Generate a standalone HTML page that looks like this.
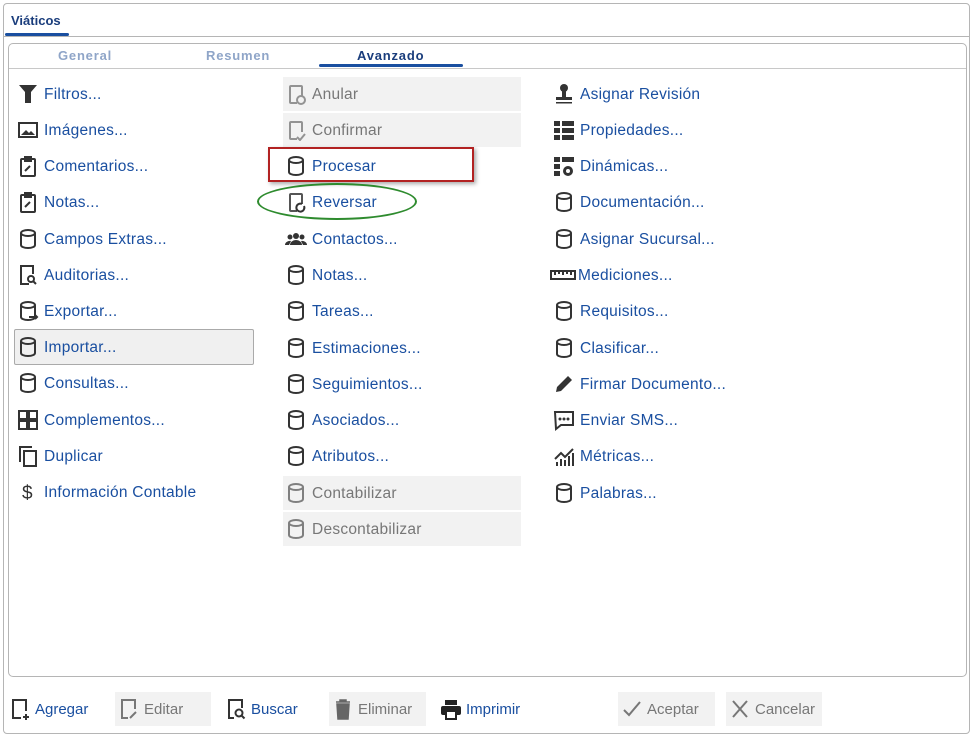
<!DOCTYPE html>
<html><head><meta charset="utf-8"><style>
*{box-sizing:border-box;margin:0;padding:0}
body{width:973px;height:736px;background:#fff;font-family:"Liberation Sans",sans-serif;position:relative;overflow:hidden}
.outer{position:absolute;left:3px;top:3px;width:967px;height:731px;border:1px solid #b5b5b5;border-radius:4px}
.hdr{position:absolute;left:11px;top:13px;font-size:13px;font-weight:bold;color:#1a3d7c}
.hul{position:absolute;left:5px;top:33px;width:64px;height:3px;background:#1a4fa0;border-radius:2px}
.hline{position:absolute;left:3px;top:36px;width:967px;height:1px;background:#b5b5b5}
.inner{position:absolute;left:8px;top:43px;width:959px;height:634px;border:1px solid #b5b5b5;border-radius:5px}
.tline{position:absolute;left:9px;top:68px;width:957px;height:1px;background:#c8c8c8}
.tab{position:absolute;top:48px;font-size:13px;font-weight:bold;color:#8fa5c8;letter-spacing:.8px}
.tul{position:absolute;left:319px;top:64px;width:144px;height:3px;background:#1a4fa0;border-radius:2px}
.it{position:absolute;height:34px;display:flex;align-items:center;font-size:15.5px;letter-spacing:.25px;color:#1a4fa0;white-space:nowrap;padding-top:2px}
.it svg{width:22px;height:22px;margin-right:5px;flex:none;margin-top:-2px}
.dis{background:#f2f2f2;color:#777;width:238px}
.dis svg{opacity:.6}
.btn{position:absolute;top:692px;height:34px;display:flex;align-items:center;font-size:15px;color:#1a4fa0}
.btn svg{width:22px;height:24px;margin-right:4px}
.bd{background:#f2f2f2;color:#777}
</style></head><body>
<svg width="0" height="0" style="position:absolute"><defs>
<g id="cyl" fill="none" stroke="#333" stroke-width="2"><ellipse cx="11" cy="5" rx="7" ry="3"/><path d="M4 5v12c0 1.7 3 3 7 3s7-1.3 7-3V5"/></g>
<g id="clip" fill="none" stroke="#333" stroke-width="2"><rect x="4" y="4" width="14" height="17" rx="1"/><rect x="8" y="2" width="6" height="4" fill="#333"/><path d="M8 16l5-5"/></g>
<g id="doc" fill="none" stroke="#555" stroke-width="2"><path d="M12 20H6a1 1 0 0 1-1-1V4a1 1 0 0 1 1-1h10a1 1 0 0 1 1 1v9"/></g>
</defs></svg>
<div class="outer"></div>
<div class="hdr">Viáticos</div><div class="hul"></div><div class="hline"></div>
<div class="inner"></div><div class="tline"></div>
<div class="tab" style="left:58px">General</div>
<div class="tab" style="left:206px">Resumen</div>
<div class="tab" style="left:357px;color:#1a3d7c">Avanzado</div>
<div class="tul"></div>

<!-- col1 -->
<div class="it" style="left:17px;top:77px"><svg viewBox="0 0 22 22"><path d="M2 2h18l-6 7v4H8V9z M8 13h6v7H8z" fill="#333"/></svg>Filtros...</div>
<div class="it" style="left:17px;top:113px"><svg viewBox="0 0 22 22"><rect x="2" y="4" width="18" height="14" fill="none" stroke="#333" stroke-width="2"/><path d="M4 16l5-5 3 3 2-2 4 4z" fill="#333"/></svg>Imágenes...</div>
<div class="it" style="left:17px;top:149px"><svg viewBox="0 0 22 22"><use href="#clip"/></svg>Comentarios...</div>
<div class="it" style="left:17px;top:185px"><svg viewBox="0 0 22 22"><use href="#clip"/></svg>Notas...</div>
<div class="it" style="left:17px;top:222px"><svg viewBox="0 0 22 22"><use href="#cyl"/></svg>Campos Extras...</div>
<div class="it" style="left:17px;top:258px"><svg viewBox="0 0 22 22"><g fill="none" stroke="#333" stroke-width="2"><path d="M12 20H4V2h12v8"/><circle cx="14" cy="15" r="3"/><path d="M16 17l3 3"/></g></svg>Auditorias...</div>
<div class="it" style="left:17px;top:294px"><svg viewBox="0 0 22 22"><use href="#cyl"/><path d="M12 17h8m-2-2l2 2-2 2" stroke="#333" stroke-width="2" fill="none"/></svg>Exportar...</div>
<div class="it" style="left:14px;top:329px;width:240px;height:36px;border:1px solid #aaa;background:#f0f0f0;padding-left:2px;border-radius:2px"><svg viewBox="0 0 22 22"><use href="#cyl"/></svg>Importar...</div>
<div class="it" style="left:17px;top:366px"><svg viewBox="0 0 22 22"><use href="#cyl"/></svg>Consultas...</div>
<div class="it" style="left:17px;top:403px"><svg viewBox="0 0 22 22"><g fill="none" stroke="#333" stroke-width="2"><rect x="2" y="2" width="8" height="8"/><rect x="12" y="2" width="8" height="8"/><rect x="2" y="12" width="8" height="8"/><rect x="12" y="12" width="8" height="8"/></g></svg>Complementos...</div>
<div class="it" style="left:17px;top:439px"><svg viewBox="0 0 22 22"><g fill="none" stroke="#333" stroke-width="2"><rect x="7" y="6" width="12" height="15"/><path d="M3 17V2h12"/></g></svg>Duplicar</div>
<div class="it" style="left:17px;top:475px"><svg viewBox="0 0 22 22"><text x="5" y="18" font-size="19" font-family="Liberation Sans" fill="#333">$</text></svg>Información Contable</div>

<!-- col2 -->
<div class="it dis" style="left:283px;top:77px;padding-left:2px"><svg viewBox="0 0 22 22"><use href="#doc"/><circle cx="16" cy="17" r="4" fill="none" stroke="#555" stroke-width="2"/></svg>Anular</div>
<div class="it dis" style="left:283px;top:113px;padding-left:2px"><svg viewBox="0 0 22 22"><use href="#doc"/><path d="M12 18l3 3 5-6" stroke="#555" stroke-width="2" fill="none"/></svg>Confirmar</div>
<div style="position:absolute;left:268px;top:147px;width:206px;height:35px;border:2px solid #b22222;box-shadow:2px 2px 4px #aaa"></div>
<div class="it" style="left:285px;top:149px"><svg viewBox="0 0 22 22"><use href="#cyl"/></svg>Procesar</div>
<div style="position:absolute;left:257px;top:183px;width:160px;height:37px;border:2px solid #2e8b2e;border-radius:50%"></div>
<div class="it" style="left:285px;top:185px"><svg viewBox="0 0 22 22"><use href="#doc"/><path d="M19 15a4 4 0 1 1-2-2" stroke="#333" stroke-width="2" fill="none"/></svg>Reversar</div>
<div class="it" style="left:285px;top:222px"><svg viewBox="0 0 22 22"><g fill="#333"><circle cx="11" cy="8" r="3"/><circle cx="5" cy="9" r="2.5"/><circle cx="17" cy="9" r="2.5"/><path d="M5 17a6 5 0 0 1 12 0z M0 17a5 4 0 0 1 6-4l-2 4z M22 17a5 4 0 0 0-6-4l2 4z"/></g></svg>Contactos...</div>
<div class="it" style="left:285px;top:258px"><svg viewBox="0 0 22 22"><use href="#cyl"/></svg>Notas...</div>
<div class="it" style="left:285px;top:294px"><svg viewBox="0 0 22 22"><use href="#cyl"/></svg>Tareas...</div>
<div class="it" style="left:285px;top:331px"><svg viewBox="0 0 22 22"><use href="#cyl"/></svg>Estimaciones...</div>
<div class="it" style="left:285px;top:367px"><svg viewBox="0 0 22 22"><use href="#cyl"/></svg>Seguimientos...</div>
<div class="it" style="left:285px;top:403px"><svg viewBox="0 0 22 22"><use href="#cyl"/></svg>Asociados...</div>
<div class="it" style="left:285px;top:439px"><svg viewBox="0 0 22 22"><use href="#cyl"/></svg>Atributos...</div>
<div class="it dis" style="left:283px;top:476px;padding-left:2px"><svg viewBox="0 0 22 22"><use href="#cyl"/></svg>Contabilizar</div>
<div class="it dis" style="left:283px;top:512px;padding-left:2px"><svg viewBox="0 0 22 22"><use href="#cyl"/></svg>Descontabilizar</div>

<!-- col3 -->
<div class="it" style="left:553px;top:77px"><svg viewBox="0 0 22 22"><g fill="#333"><circle cx="11" cy="5" r="4"/><rect x="9" y="8" width="4" height="6"/><rect x="3" y="14" width="16" height="3"/><rect x="3" y="19" width="16" height="1.5"/></g></svg>Asignar Revisión</div>
<div class="it" style="left:553px;top:113px"><svg viewBox="0 0 22 22"><g fill="#333"><rect x="1" y="2" width="6" height="5"/><rect x="9" y="2" width="12" height="5"/><rect x="1" y="9" width="6" height="5"/><rect x="9" y="9" width="12" height="5"/><rect x="1" y="16" width="6" height="5"/><rect x="9" y="16" width="12" height="5"/></g></svg>Propiedades...</div>
<div class="it" style="left:553px;top:149px"><svg viewBox="0 0 22 22"><g fill="#333"><rect x="1" y="2" width="6" height="5"/><rect x="9" y="2" width="12" height="5"/><rect x="1" y="9" width="6" height="5"/><rect x="1" y="16" width="6" height="5"/><circle cx="15" cy="16" r="5"/></g><circle cx="15" cy="16" r="2" fill="#fff"/></svg>Dinámicas...</div>
<div class="it" style="left:553px;top:185px"><svg viewBox="0 0 22 22"><use href="#cyl"/></svg>Documentación...</div>
<div class="it" style="left:553px;top:222px"><svg viewBox="0 0 22 22"><use href="#cyl"/></svg>Asignar Sucursal...</div>
<div class="it" style="left:550px;top:258px"><svg viewBox="0 0 26 22" style="width:26px;margin-right:2px"><path d="M1 7h24v8H1z M5 7v4 M9 7v3 M13 7v4 M17 7v3 M21 7v4" fill="none" stroke="#333" stroke-width="2"/></svg>Mediciones...</div>
<div class="it" style="left:553px;top:294px"><svg viewBox="0 0 22 22"><use href="#cyl"/></svg>Requisitos...</div>
<div class="it" style="left:553px;top:331px"><svg viewBox="0 0 22 22"><use href="#cyl"/></svg>Clasificar...</div>
<div class="it" style="left:553px;top:367px"><svg viewBox="0 0 22 22"><path d="M3 19l1-5L15 3l4 4L8 18z M2 21h4" fill="#333"/></svg>Firmar Documento...</div>
<div class="it" style="left:553px;top:403px"><svg viewBox="0 0 22 22"><path d="M2 3h18v13H8l-5 4z" fill="none" stroke="#333" stroke-width="2"/><g fill="#333"><circle cx="7" cy="10" r="1.5"/><circle cx="11" cy="10" r="1.5"/><circle cx="15" cy="10" r="1.5"/></g></svg>Enviar SMS...</div>
<div class="it" style="left:553px;top:439px"><svg viewBox="0 0 22 22"><path d="M2 14l6-6 4 4 8-8" fill="none" stroke="#333" stroke-width="2"/><g fill="#333"><rect x="3" y="17" width="2" height="4"/><rect x="7" y="14" width="2" height="7"/><rect x="11" y="15" width="2" height="6"/><rect x="15" y="11" width="2" height="10"/><rect x="19" y="8" width="2" height="13"/></g></svg>Métricas...</div>
<div class="it" style="left:553px;top:476px"><svg viewBox="0 0 22 22"><use href="#cyl"/></svg>Palabras...</div>

<!-- bottom -->
<div class="btn" style="left:9px"><svg viewBox="0 0 22 24"><path d="M12 21H4V3h13v11 M17 17v6 M14 20h6" fill="none" stroke="#333" stroke-width="2"/></svg>Agregar</div>
<div class="btn bd" style="left:115px;width:96px;padding-left:3px"><svg viewBox="0 0 22 24"><path d="M10 21H4V3h13v9 M12 21l6-6" fill="none" stroke="#777" stroke-width="2"/></svg>Editar</div>
<div class="btn" style="left:225px"><svg viewBox="0 0 22 24"><path d="M9 21H4V3h13v8" fill="none" stroke="#333" stroke-width="2"/><circle cx="14" cy="16" r="3.5" fill="none" stroke="#333" stroke-width="2"/><path d="M16.5 18.5l3 3" stroke="#333" stroke-width="2"/></svg>Buscar</div>
<div class="btn bd" style="left:329px;width:97px;padding-left:3px"><svg viewBox="0 0 22 24"><path d="M4 5h14M8 5V3h6v2 M5 7h12l-1 15H6z" fill="#666" stroke="#666" stroke-width="1.5"/></svg>Eliminar</div>
<div class="btn" style="left:440px"><svg viewBox="0 0 22 24"><g fill="#222"><rect x="5" y="3" width="12" height="5"/><rect x="1" y="9" width="20" height="9" rx="2"/></g><rect x="6" y="14" width="10" height="8" fill="#fff" stroke="#222" stroke-width="2"/></svg>Imprimir</div>
<div class="btn bd" style="left:618px;width:97px;padding-left:3px"><svg viewBox="0 0 22 24"><path d="M3 13l5 5L19 5" fill="none" stroke="#777" stroke-width="2"/></svg>Aceptar</div>
<div class="btn bd" style="left:726px;width:96px;padding-left:3px"><svg viewBox="0 0 22 24"><path d="M4 4l14 16M18 4L4 20" fill="none" stroke="#777" stroke-width="2"/></svg>Cancelar</div>
</body></html>
